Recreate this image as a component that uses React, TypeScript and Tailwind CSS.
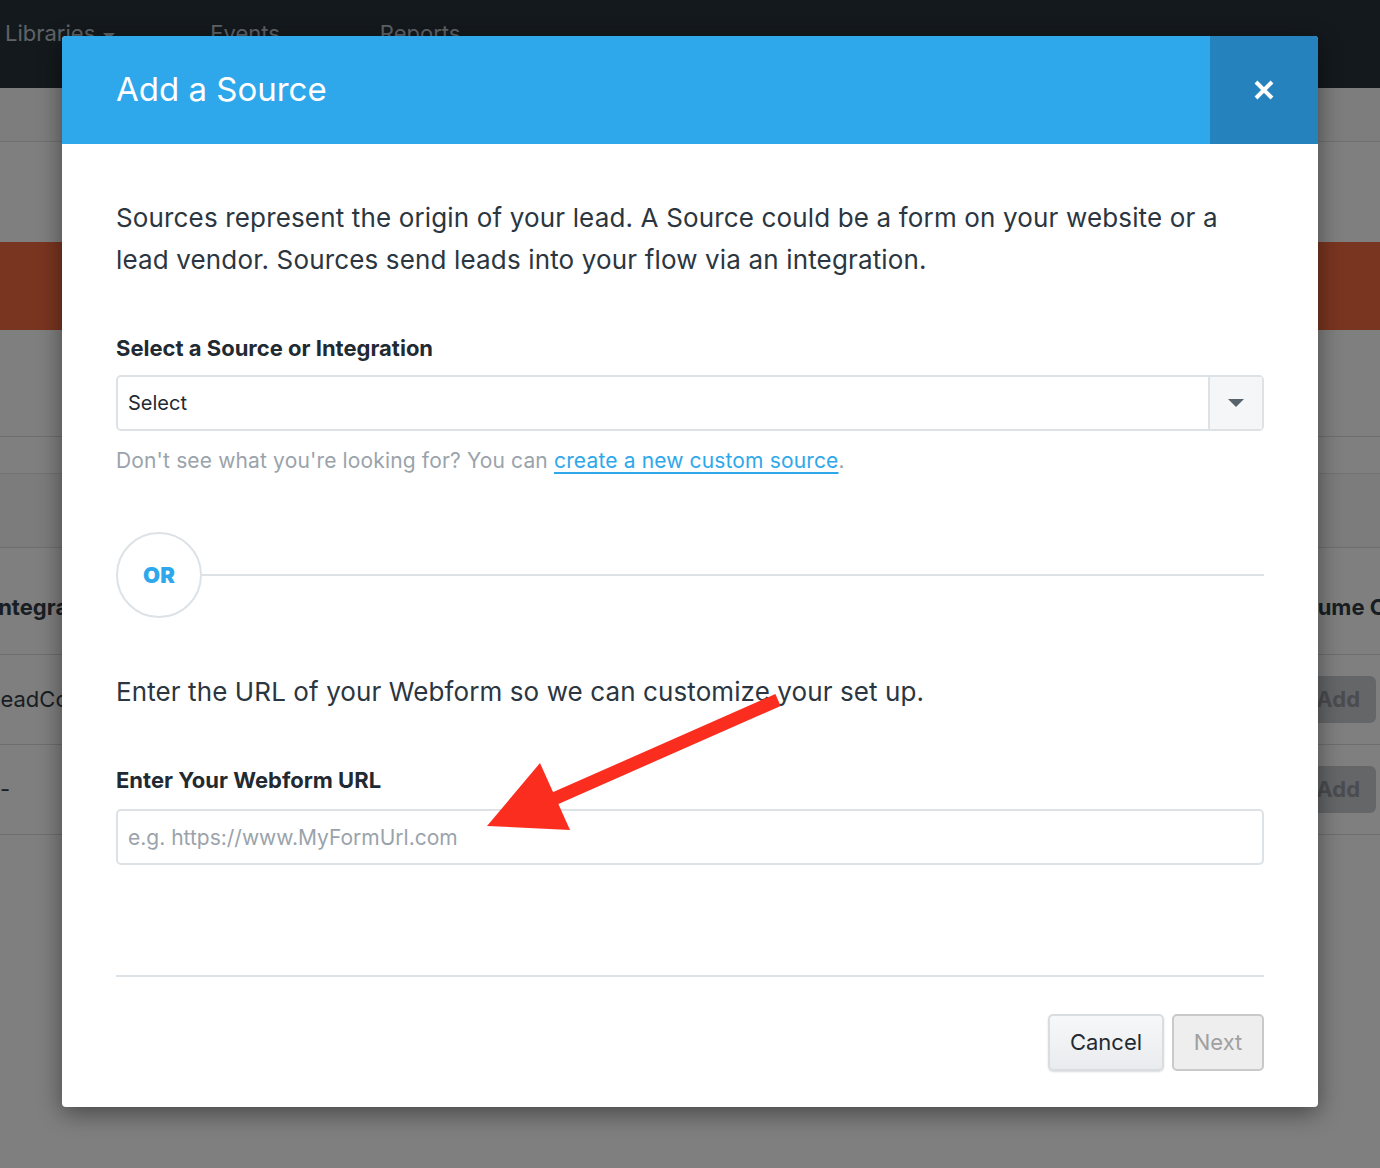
import React from 'react'

const font = { fontFamily: 'Inter, "Noto Sans", sans-serif' }

const NavBar = () => (
  <div className="flex h-[88px] items-start bg-[#28323a] pt-[17px] text-[22px] text-[#bec6cc]">
    <div className="ml-[5px] flex items-center gap-2">
      Libraries
      <span className="mt-1 h-0 w-0 border-x-[6px] border-t-[6px] border-x-transparent border-t-[#bec6cc]" />
    </div>
    <div className="ml-[95px]">Events</div>
    <div className="ml-[100px]">Reports</div>
  </div>
)

const BackgroundPage = () => (
  <div className="flex flex-col bg-white">
    <NavBar />
    <div className="h-[54px] border-b border-[#e0e0e0] bg-[#fbfbfb]" />
    <div className="h-[100px]" />
    <div className="h-[88px] bg-[#f46a40]" />
    <div className="h-[107px] border-b border-[#dcdcdc]" />
    <div className="h-[37px] border-b border-[#e4e4e4]" />
    <div className="h-[74px] border-b border-[#dcdcdc] bg-[#f8f8f8]" />
    <div className="flex h-[107px] items-center justify-between border-b border-[#dcdcdc] pt-[13px] text-[22px] font-bold text-[#333d47]">
      <span className="-ml-[8px]">Integra</span>
      <span className="-mr-[6px]">ume C</span>
    </div>
    {['LeadCo', '-'].map((name) => (
      <div
        key={name}
        className="flex h-[90px] items-center justify-between border-b border-[#dcdcdc] text-[22px] text-[#333d47]"
      >
        <span className={name === '-' ? 'ml-0' : '-ml-[12px]'}>{name}</span>
        <span className="mr-[4px] rounded-md bg-[#c8ccd0] px-4 py-[7px] font-bold text-[#95999f]">
          Add
        </span>
      </div>
    ))}
    <div className="flex-1" />
  </div>
)

const Arrow = () => (
  <svg
    className="pointer-events-none absolute left-0 top-0"
    width="1256"
    height="1070"
    viewBox="62 36 1256 1070"
  >
    <line x1="778" y1="700" x2="540" y2="805" stroke="#fb2d1f" strokeWidth="13" />
    <polygon points="540,763 487,826 570,830" fill="#fb2d1f" />
  </svg>
)

const Modal = () => (
  <div className="relative flex w-[1256px] flex-col overflow-hidden rounded-[4px] bg-white shadow-[0_6px_24px_rgba(0,0,0,0.45)]">
    <div className="flex h-[108px] items-stretch bg-[#2ea8eb]">
      <h1 className="flex flex-1 items-center pl-[54px] text-[33px] text-white">Add a Source</h1>
      <button className="flex w-[108px] items-center justify-center bg-[#2682bd]">
        <svg width="22" height="22" viewBox="0 0 22 22">
          <path d="M3 3 L19 19 M19 3 L3 19" stroke="white" strokeWidth="4" />
        </svg>
      </button>
    </div>

    <div className="flex flex-col px-[54px] pb-[36px] pt-[53px] text-[#2b3640]">
      <p className="text-[26px] leading-[42px] tracking-[0.15px]">
        Sources represent the origin of your lead. A Source could be a form on your website or a
        lead vendor. Sources send leads into your flow via an integration.
      </p>

      <label className="mt-[53px] text-[22px] font-bold leading-[28px] text-[#1f2a33]">
        Select a Source or Integration
      </label>
      <div className="mt-[13px] flex h-[56px] rounded-[5px] border-2 border-[#dde2e6]">
        <div className="flex flex-1 items-center pl-[10px] text-[20px] text-[#1f2a33]">Select</div>
        <div className="flex w-[54px] items-center justify-center border-l-2 border-[#dde2e6] bg-[#f5f6f8]">
          <span className="h-0 w-0 border-x-[8px] border-t-[8px] border-x-transparent border-t-[#56636d]" />
        </div>
      </div>
      <p className="mt-[16px] text-[21px] leading-[28px] tracking-[0.15px] text-[#9aa3ab]">
        Don't see what you're looking for? You can{' '}
        <a className="text-[#2ea8eb] underline underline-offset-4">create a new custom source</a>.
      </p>

      <div className="mt-[57px] flex items-center">
        <div className="flex h-[86px] w-[86px] items-center justify-center rounded-full border-2 border-[#dde2e6] text-[22px] font-black text-[#2ea8eb]">
          OR
        </div>
        <div className="h-[2px] flex-1 bg-[#dde2e6]" />
      </div>

      <p className="mt-[53px] text-[26px] leading-[42px] tracking-[0.1px]">
        Enter the URL of your Webform so we can customize your set up.
      </p>

      <label className="mt-[53px] text-[22px] font-bold leading-[28px] text-[#1f2a33]">
        Enter Your Webform URL
      </label>
      <input
        className="mt-[15px] h-[56px] rounded-[5px] border-2 border-[#dde2e6] px-[10px] text-[21px] text-[#1f2a33] outline-none placeholder:text-[#9aa3ab]"
        style={font}
        placeholder="e.g. https://www.MyFormUrl.com"
      />

      <div className="mt-[110px] h-[2px] bg-[#dde2e6]" />

      <div className="mt-[37px] flex justify-end gap-2">
        <button className="h-[57px] w-[116px] rounded-[5px] border-2 border-[#d8dde1] bg-gradient-to-b from-[#f7f8f9] to-[#e9ebee] text-[22px] text-[#1f2a33] shadow-[0_1px_2px_rgba(0,0,0,0.15)]">
          Cancel
        </button>
        <button className="h-[57px] w-[92px] rounded-[5px] border-2 border-[#c9c9c9] bg-[#eeeeee] text-[22px] text-[#a0a0a0]">
          Next
        </button>
      </div>
    </div>
    <Arrow />
  </div>
)

export default function App() {
  return (
    <div className="relative h-[1168px] overflow-hidden" style={font}>
      <BackgroundPage />
      <div className="absolute inset-0 flex items-start justify-center bg-black/50 pt-[36px]">
        <Modal />
      </div>
    </div>
  )
}
